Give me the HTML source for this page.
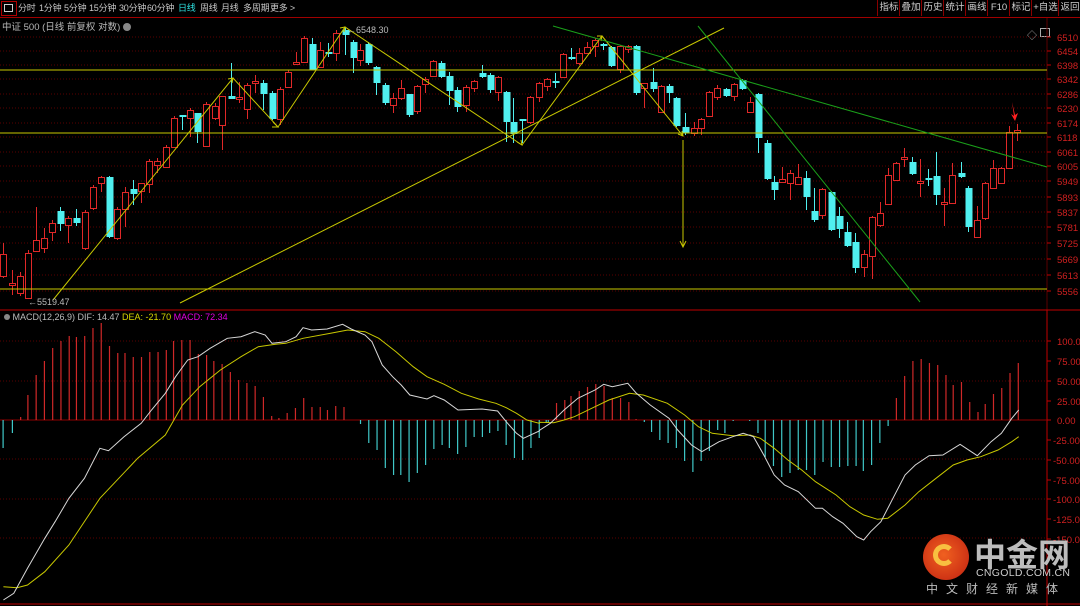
<!DOCTYPE html>
<html><head><meta charset="utf-8"><style>
html,body{margin:0;padding:0;background:#000;overflow:hidden}
body{width:1080px;height:606px;position:relative;font-family:"Liberation Sans","Noto Sans CJK SC",sans-serif}
.tb{position:absolute;top:0;left:0;width:1080px;height:17px;border-bottom:1px solid #a00000;}
.tb span{position:absolute;top:3px;font-size:9px;line-height:11px;color:#c8c8c8;white-space:nowrap;letter-spacing:-0.2px}
.rb{position:absolute;top:0;height:16px;border-left:1px solid #8a0000;font-size:9.5px;color:#d0d0d0;text-align:center;line-height:16px}
</style></head><body>
<div class="tb">
<div style="position:absolute;left:1px;top:1px;width:14px;height:13px;border:1px solid #b00000"></div>
<div style="position:absolute;left:4px;top:4px;width:7px;height:6px;border:1px solid #ccc"></div>
<span style="left:18px">分时</span><span style="left:39px">1分钟</span><span style="left:64px">5分钟</span><span style="left:89px">15分钟</span><span style="left:119px">30分钟</span><span style="left:147px">60分钟</span><span style="left:178px;color:#2ee0e0">日线</span><span style="left:200px">周线</span><span style="left:221px">月线</span><span style="left:243px">多周期</span><span style="left:270px">更多 &gt;</span>
<div class="rb" style="left:877px;width:22px">指标</div><div class="rb" style="left:899px;width:22px">叠加</div><div class="rb" style="left:921px;width:22px">历史</div><div class="rb" style="left:943px;width:22px">统计</div><div class="rb" style="left:965px;width:22px">画线</div><div class="rb" style="left:987px;width:22px">F10</div><div class="rb" style="left:1009px;width:22px">标记</div><div class="rb" style="left:1031px;width:27px">+自选</div><div class="rb" style="left:1058px;width:22px">返回</div>
</div>
<div style="position:absolute;left:2px;top:19px;font-size:9.5px;color:#b8b8b8">中证 500 (日线 前复权 对数) <span style="display:inline-block;width:8px;height:8px;border-radius:50%;background:#888;vertical-align:-1px"></span></div>
<div style="position:absolute;left:1027px;top:27px;font-size:10px;color:#aaa">◇</div>
<div style="position:absolute;left:1040px;top:28px;width:8px;height:7px;border:1px solid #aaa"></div>
<svg id="s" width="1080" height="606" style="position:absolute;left:0;top:0" xmlns="http://www.w3.org/2000/svg">
<line x1="1047" y1="18" x2="1047" y2="310" stroke="#5a0000"/>
<line x1="1047" y1="310" x2="1047" y2="606" stroke="#c00000"/>
<line x1="0" y1="310" x2="1080" y2="310" stroke="#c00000"/>
<line x1="0" y1="604" x2="1080" y2="604" stroke="#c00000"/>
<g id="grid"></g>
<g id="cand"></g>
<g fill="none" stroke="#c8c800" stroke-width="1">
<line x1="0" y1="70" x2="1047" y2="70"/><line x1="0" y1="133" x2="1047" y2="133"/><line x1="0" y1="289" x2="1047" y2="289"/>
<polyline points="53,300 233,78 278,127 345,27 522,145 602,36 683,136"/>
<line x1="180" y1="303" x2="724" y2="28"/>
<line x1="683" y1="140" x2="683" y2="247"/>
<polyline points="680,241 683,247 686,241"/>
<polyline points="228,79 233,78 232,83"/><polyline points="273,122 278,127 272,127"/><polyline points="340,28 345,27 344,32"/><polyline points="517,142 522,145 521,140"/><polyline points="597,36 602,36 601,41"/><polyline points="678,134 683,136 682,131"/>
</g>
<g stroke="#1aa01a" stroke-width="1"><line x1="553" y1="26" x2="1047" y2="167"/><line x1="698" y1="26" x2="920" y2="302"/></g>
<path d="M1012,102 L1014,116 L1011,114 L1015,121 L1018,113 L1015,115 Z" fill="#ff2020"/>
<g id="mac"></g>
<text x="28" y="305" font-size="9" fill="#bbb">←5519.47</text>
<text x="347" y="33" font-size="9" fill="#bbb">←6548.30</text>
<g font-size="9.5" fill="#d02020" font-family="Liberation Sans,sans-serif" id="pl"></g>
</svg>
<div style="position:absolute;left:4px;top:312px;font-size:9px;color:#bbb;white-space:nowrap"><span style="display:inline-block;width:6px;height:6px;border-radius:50%;background:#888"></span> MACD(12,26,9) DIF: 14.47 <span style="color:#d8d800">DEA: -21.70</span> <span style="color:#e000e0">MACD: 72.34</span></div>
<div style="position:absolute;left:923px;top:534px;width:46px;height:46px;border-radius:50%;background:radial-gradient(circle at 45% 45%,#f06020,#c02010)"></div>
<div style="position:absolute;left:933px;top:544px;width:22px;height:22px;border-radius:50%;border:5px solid #f8c040;border-right-color:transparent;box-sizing:border-box"></div>
<div style="position:absolute;left:974px;top:530px;font-size:32px;font-weight:bold;color:#bdbdbd;letter-spacing:0px;font-family:'Noto Sans CJK SC',sans-serif">中金网</div>
<div style="position:absolute;left:976px;top:567px;font-size:10.5px;color:#ccc;letter-spacing:0.3px">CNGOLD.COM.CN</div>
<div style="position:absolute;left:926px;top:580px;font-size:12px;color:#bbb;letter-spacing:8px;font-family:'Noto Sans CJK SC',sans-serif">中文财经新媒体</div>
<script>
var NS="http://www.w3.org/2000/svg";
function el(p,t,a){var e=document.createElementNS(NS,t);for(var k in a)e.setAttribute(k,a[k]);document.getElementById(p).appendChild(e);return e;}
var pl=[["6510",37],["6454",51],["6398",65],["6342",79],["6286",94],["6230",108],["6174",123],["6118",137],["6061",152],["6005",166],["5949",181],["5893",197],["5837",212],["5781",227],["5725",243],["5669",259],["5613",275],["5556",291]];
pl.forEach(function(p){el("grid","line",{x1:0,y1:p[1],x2:1047,y2:p[1],stroke:"#5a0000","stroke-dasharray":"1,2"});el("grid","line",{x1:1047,y1:p[1],x2:1051,y2:p[1],stroke:"#c00000"});var t=el("pl","text",{x:1057,y:p[1]+4});t.textContent=p[0];});
var ml=[["100.0",341],["75.00",361],["50.00",381],["25.00",401],["0.00",420],["-25.00",440],["-50.00",460],["-75.00",480],["-100.0",499],["-125.0",519],["-150.0",539]];
ml.forEach(function(p){var t=el("pl","text",{x:p[0].length>5?1053:1057,y:p[1]+4});t.textContent=p[0];el("grid","line",{x1:1047,y1:p[1],x2:1051,y2:p[1],stroke:"#c00000"});});
[341,381,420,459,499,538].forEach(function(y){el("grid","line",{x1:0,y1:y,x2:1047,y2:y,stroke:y==420?"#900000":"#5a0000","stroke-dasharray":y==420?"":"1,2"});});
var C=[[3,254,276,243,278,'r'],[12,283,285,270,295,'r'],[20,276,293,272,296,'r'],[28,253,298,250,299,'r'],[36,240,251,207,252,'r'],[44,238,248,228,253,'r'],[52,223,232,220,241,'r'],[60,211,224,207,231,'c'],[68,218,225,216,243,'r'],[76,218,223,209,226,'c'],[85,212,248,210,250,'r'],[93,187,208,185,210,'r'],[101,177,183,176,192,'r'],[109,177,237,176,238,'c'],[117,209,238,207,240,'r'],[125,192,209,187,227,'r'],[133,189,194,180,205,'c'],[141,183,191,183,203,'r'],[149,161,184,159,193,'r'],[157,161,165,158,173,'r'],[166,147,167,145,168,'r'],[174,118,147,116,148,'r'],[182,115,117,115,130,'c'],[190,110,118,108,137,'r'],[197,113,132,113,143,'c'],[206,104,146,102,147,'r'],[215,106,118,103,120,'r'],[222,96,125,96,150,'r'],[231,96,99,63,99,'c'],[239,97,99,82,103,'r'],[247,85,109,83,119,'r'],[255,81,83,75,93,'r'],[263,83,94,80,110,'c'],[272,93,119,91,120,'c'],[280,89,119,87,125,'r'],[288,72,87,70,88,'r'],[296,62,64,52,65,'r'],[304,38,62,36,63,'r'],[312,44,70,38,70,'c'],[320,50,67,42,68,'r'],[328,52,54,43,57,'c'],[336,33,53,30,61,'r'],[345,30,35,28,55,'c'],[353,42,58,40,73,'c'],[360,50,60,44,66,'r'],[368,44,63,42,65,'c'],[376,67,83,66,95,'c'],[385,85,103,83,105,'c'],[393,98,105,93,113,'r'],[401,88,98,80,100,'r'],[409,94,115,94,117,'c'],[417,86,111,85,114,'r'],[425,79,84,77,93,'r'],[433,61,76,60,77,'r'],[441,63,77,61,78,'c'],[449,76,91,72,105,'c'],[457,90,107,87,112,'c'],[466,87,105,85,112,'r'],[474,81,88,80,92,'r'],[482,73,77,65,78,'c'],[490,75,90,73,93,'c'],[498,77,92,76,101,'r'],[506,92,122,91,142,'c'],[513,122,134,98,143,'c'],[522,119,121,120,143,'c'],[530,97,122,96,124,'r'],[539,83,97,82,102,'r'],[547,79,86,78,91,'r'],[555,81,83,73,88,'c'],[563,54,77,53,78,'r'],[571,57,58,48,60,'c'],[579,53,63,48,65,'r'],[587,47,53,42,54,'r'],[595,40,46,38,57,'r'],[603,44,46,43,50,'c'],[611,47,66,46,67,'c'],[620,46,69,45,73,'r'],[628,46,49,45,53,'r'],[636,46,93,45,95,'c'],[644,83,88,83,108,'r'],[653,82,89,68,92,'c'],[661,86,112,85,113,'r'],[669,86,93,84,103,'c'],[676,98,126,97,127,'c'],[685,127,133,113,135,'c'],[694,128,133,122,136,'r'],[701,119,128,118,135,'r'],[709,92,116,91,117,'r'],[717,88,97,85,100,'r'],[726,89,96,88,97,'c'],[734,84,96,83,101,'r'],[742,80,89,79,90,'c'],[750,102,112,97,113,'r'],[758,94,138,93,153,'c'],[767,143,179,140,180,'c'],[774,182,190,176,200,'c'],[782,179,182,167,183,'r'],[790,173,183,170,200,'r'],[798,177,184,164,185,'r'],[806,178,197,171,210,'c'],[814,211,220,188,222,'c'],[822,189,215,188,219,'r'],[831,192,230,191,231,'c'],[839,216,229,207,238,'c'],[847,232,246,222,247,'c'],[855,242,268,233,273,'c'],[864,254,267,250,277,'r'],[872,217,256,216,279,'r'],[880,213,225,202,227,'r'],[888,175,204,168,205,'r'],[896,163,180,162,181,'r'],[904,157,159,148,167,'r'],[912,162,174,157,175,'c'],[920,181,183,159,197,'r'],[928,178,179,169,186,'c'],[936,176,195,152,205,'c'],[944,202,204,188,226,'r'],[952,175,203,163,204,'r'],[961,173,177,162,178,'c'],[968,188,227,186,232,'c'],[977,220,237,206,238,'r'],[985,183,218,182,220,'r'],[993,168,188,160,189,'r'],[1001,168,183,167,184,'r'],[1009,132,168,126,169,'r'],[1017,130,132,124,141,'r']];
C.forEach(function(c){var col=c[5]=='r'?'#e02828':'#50f0f0';
el("cand","line",{x1:c[0]+.5,y1:c[3],x2:c[0]+.5,y2:c[4],stroke:col});
if(c[5]=='r')el("cand","rect",{x:c[0]-2.5,y:c[1]+.5,width:6,height:Math.max(1,c[2]-c[1]),fill:"#000",stroke:col});
else el("cand","rect",{x:c[0]-2.5,y:c[1],width:7,height:Math.max(2,c[2]-c[1]),fill:col});});
var H1=[[3,448],[12,433],[20,417],[27,395],[35,375],[43,361],[51,348],[59,341],[67,336],[74,337],[82,336],[90,328],[98,323],[106,346],[114,353],[121,353],[129,357],[137,357],[145,352],[153,352],[161,350],[168,341],[176,340],[184,340],[192,354],[200,355],[207,361],[215,364],[223,372],[231,380],[239,383],[247,386],[255,397],[263,416],[270,418],[278,413],[286,408],[294,398],[302,407],[310,407],[317,410],[325,406],[333,407],[341,420],[349,424],[357,443],[365,450],[373,468],[381,475],[388,475],[396,482],[404,473],[412,465],[420,449],[428,445],[435,448],[443,454],[451,447],[459,437],[467,437],[474,433],[482,431],[490,445],[498,458],[506,460],[514,448],[522,438]];
var H2=[[546,422],[548,422],[556,403],[564,400],[570,396],[578,391],[586,387],[594,384],[602,386],[610,398],[618,398],[626,402],[633,419],[641,422],[648,432],[656,440],[664,443],[672,448],[680,461],[688,472],[696,461],[704,451],[712,430],[719,433],[727,421],[735,420],[743,421],[751,433],[758,457],[766,466],[774,477],[782,473],[790,470],[798,470],[806,475],[814,462],[822,467],[830,467],[838,466],[846,466],[853,471],[861,465],[869,443],[877,426],[885,398],[893,376],[901,361],[909,359],[917,363],[925,365],[933,375],[940,385],[948,382],[956,402],[964,412],[971,404],[979,394],[987,388],[995,373],[1003,363]];
function bar(x,y){var col=y<420?'#d02828':'#40c8c8';el("mac","line",{x1:x,y1:420,x2:x,y2:y,stroke:col,"stroke-width":1.2});}
H1.forEach(function(h){bar(h[0]*1.033,h[1]);});
H2.forEach(function(h){bar(540+(h[0]-540)*1.033,h[1]);});
function pts(a,b){var s=[];a.forEach(function(p){s.push((p[0]/2.904).toFixed(1)+","+(305+p[1]/3).toFixed(1));});b.forEach(function(p){s.push((540+p[0]/2.904).toFixed(1)+","+(305+p[1]/3).toFixed(1));});return s.join(" ");}
var D1=[[10,885],[40,865],[80,790],[130,700],[160,650],[200,580],[245,520],[290,430],[315,437],[360,395],[410,355],[440,315],[480,265],[510,215],[545,165],[575,155],[610,130],[660,100],[700,95],[740,80],[770,90],[790,115],[830,110],[860,95],[880,68],[905,75],[950,72],[995,58],[1020,72],[1060,90],[1080,110],[1110,180],[1140,215],[1165,240],[1190,270],[1240,282],[1260,272],[1290,285],[1330,315],[1400,312],[1445,318],[1470,350],[1500,385],[1520,400],[1566,378]];
var D2=[[0,375],[30,355],[70,315],[110,280],[160,255],[185,238],[210,245],[255,235],[280,265],[320,300],[375,340],[400,375],[440,420],[470,440],[520,410],[560,395],[590,385],[620,395],[650,450],[680,510],[710,540],[750,560],[800,610],[820,610],[850,635],[880,655],[920,695],[940,705],[960,680],[990,650],[1020,590],[1060,510],[1090,480],[1130,452],[1170,450],[1220,418],[1270,452],[1310,410],[1340,385],[1370,340],[1390,315]];
var E1=[[10,845],[50,848],[80,840],[130,800],[200,720],[290,580],[400,460],[480,390],[530,300],[580,245],[640,195],[700,155],[750,125],[800,118],[830,115],[880,100],[960,85],[1010,75],[1060,80],[1100,100],[1150,140],[1200,185],[1240,215],[1290,238],[1340,265],[1390,282],[1440,295],[1470,308],[1500,325],[1530,345],[1566,355]];
var E2=[[0,352],[40,353],[70,345],[100,335],[150,310],[200,285],[260,265],[300,270],[370,295],[420,330],[460,365],[500,385],[560,392],[610,390],[640,400],[680,430],[720,465],[760,495],[800,530],[860,570],[900,605],[940,630],[980,643],[1010,640],[1060,600],[1100,560],[1150,520],[1200,480],[1240,465],[1280,455],[1330,435],[1370,410],[1390,395]];
el("mac","polyline",{points:pts(E1,E2),fill:"none",stroke:"#c8c800"});
el("mac","polyline",{points:pts(D1,D2),fill:"none",stroke:"#d8d8d8"});
</script>
</body></html>
